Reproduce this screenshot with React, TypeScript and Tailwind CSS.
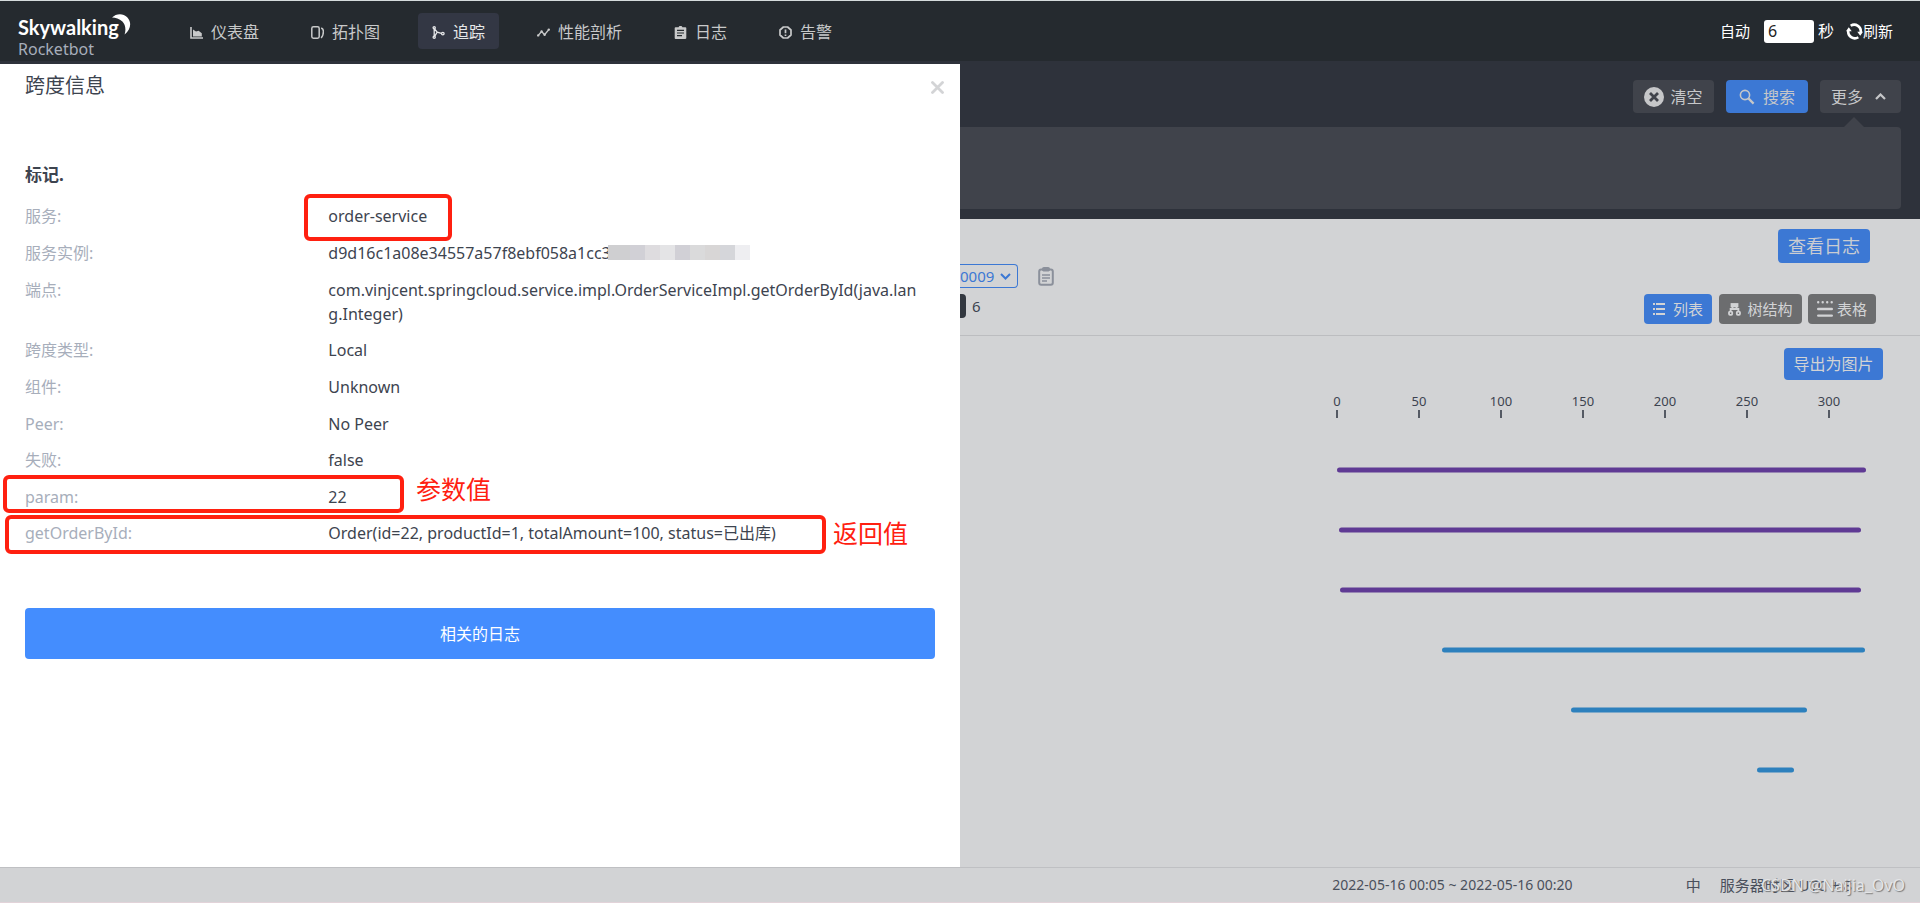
import type { ReactNode } from "react";

type NavItem = {
  label: string;
  icon: ReactNode;
  active?: boolean;
};

type Tag = {
  label: string;
  value: string;
  latin?: boolean;
  masked?: boolean;
  frame?: string;
  note?: string;
  noteClass?: string;
};

type Span = {
  start: number;
  end: number;
  color: string;
};

const NAV: NavItem[] = [
  {
    label: "仪表盘",
    icon: (
      <>
        <path d="M1 1v11h12" fill="none" stroke="currentColor" strokeWidth="1.6" />
        <path d="M3 10.4V3.6l3 1.8 2.6-.6 3.2 2.4v3.2z" fill="currentColor" />
      </>
    ),
  },
  {
    label: "拓扑图",
    icon: (
      <g fill="none" stroke="currentColor" strokeWidth="1.5">
        <rect x="0.8" y="0.8" width="7.4" height="11.4" rx="1.6" />
        <path d="M10.2 2c2 .8 2.2 2 2.2 3.4 0 2.2-.4 4.4-2.2 6.6" />
      </g>
    ),
  },
  {
    label: "追踪",
    active: true,
    icon: (
      <g fill="none" stroke="currentColor" strokeWidth="1.3">
        <circle cx="2.2" cy="1.8" r="1.1" />
        <circle cx="2.2" cy="11.2" r="1.1" />
        <circle cx="10.8" cy="7.6" r="1.3" />
        <path d="M2.2 3v7M2.6 3l2.6 3.2 4.2 1.2M2.8 10.2l2.4-4" />
      </g>
    ),
  },
  {
    label: "性能剖析",
    icon: (
      <>
        <path d="M1 9.6l3.6-4 3 3.2L12 3.4" fill="none" stroke="currentColor" strokeWidth="1.4" />
        <g fill="currentColor">
          <circle cx="1.2" cy="9.4" r="1.2" />
          <circle cx="4.6" cy="5.4" r="1.2" />
          <circle cx="7.6" cy="8.8" r="1.2" />
          <circle cx="11.8" cy="3.6" r="1.2" />
        </g>
      </>
    ),
  },
  {
    label: "日志",
    icon: (
      <path
        fillRule="evenodd"
        fill="currentColor"
        d="M1.6 1.2h3a2 2 0 0 1 3.8 0h3c.5 0 .9.4.9.9v10c0 .5-.4.9-.9.9H1.6a.9.9 0 0 1-.9-.9v-10c0-.5.4-.9.9-.9zM3 3.8V5h7V3.8zM3 6.4v1.2h7V6.4zM3 9v1.2h5V9z"
      />
    ),
  },
  {
    label: "告警",
    icon: (
      <>
        <path
          d="M4.4 1h4.2L12 4v5L8.6 12H4.4L1 9V4z"
          fill="none"
          stroke="currentColor"
          strokeWidth="1.7"
          strokeLinejoin="round"
        />
        <path d="M6.5 3.4v3.800M6.5 8.4v1.6" stroke="currentColor" strokeWidth="1.7" />
      </>
    ),
  },
];

const TAGS: Tag[] = [
  {
    label: "服务:",
    value: "order-service",
    frame: "left-[279px] -top-[10px] h-[47px] w-[148px]",
  },
  { label: "服务实例:", value: "d9d16c1a08e34557a57f8ebf058a1cc3", masked: true },
  {
    label: "端点:",
    value: "com.vinjcent.springcloud.service.impl.OrderServiceImpl.getOrderById(java.lang.Integer)",
  },
  { label: "跨度类型:", value: "Local" },
  { label: "组件:", value: "Unknown" },
  { label: "Peer:", value: "No Peer", latin: true },
  { label: "失败:", value: "false" },
  {
    label: "param:",
    value: "22",
    latin: true,
    frame: "-left-[22px] -top-[10px] h-[38px] w-[401px]",
    note: "参数值",
    noteClass: "left-[391px] -top-[12px]",
  },
  {
    label: "getOrderById:",
    value: "Order(id=22, productId=1, totalAmount=100, status=已出库)",
    latin: true,
    frame: "-left-[20px] -top-[6px] h-[39px] w-[821px]",
    note: "返回值",
    noteClass: "left-[808px] -top-[4px]",
  },
];

const MASK = [
  "w-[22px] bg-[#cfcfd1]",
  "w-[15px] bg-[#d1d0d6]",
  "w-[15px] bg-[#dedcdf]",
  "w-[15px] bg-[#e4e4e6]",
  "w-[15px] bg-[#d1d0d6]",
  "w-[15px] bg-[#dadadb]",
  "w-[15px] bg-[#d8d6d6]",
  "w-[15px] bg-[#d5d6da]",
  "w-[15px] bg-[#eeeef1]",
];

const TICKS = [0, 50, 100, 150, 200, 250, 300];

// pixel positions measured from the start of the trace
const SPANS: Span[] = [
  { start: 0, end: 529, color: "#5f3a94" },
  { start: 2, end: 524, color: "#5f3a94" },
  { start: 3, end: 524, color: "#5f3a94" },
  { start: 105, end: 528, color: "#2d80bd" },
  { start: 234, end: 470, color: "#2d80bd" },
  { start: 420, end: 457, color: "#2d80bd" },
];

function Header() {
  return (
    <header className="flex h-[61px] shrink-0 items-center border-t border-[#d5dbdc] bg-[#252a2f] pl-[18px] pr-[27px]">
      <a href="#" className="relative block w-[158px] pt-[7px]">
        <span className="block font-['Lato'] text-xl leading-7 font-bold text-white">Skywalking</span>
        <svg className="absolute top-2 left-[94px] h-[21px] w-[19px]" viewBox="0 0 19 21" fill="#fff">
          <path d="M0 3.6C4-.6 11-1 15.2 3.2 20.2 8.4 18.6 16 12.6 20.4 14.2 15.6 13.4 10.6 10.4 7.6 7.4 4.6 3.6 4 0 3.6z" />
        </svg>
        <span className="block text-base leading-4 text-[#a7aebb]">Rocketbot</span>
      </a>
      <nav className="flex gap-6">
        {NAV.map((item) => (
          <a
            key={item.label}
            href="#"
            className={
              item.active
                ? "flex h-9 items-center gap-2 rounded-[4px] bg-[#333744] px-[14px] pt-0.5 text-base text-[#e6e7e9]"
                : "flex h-9 items-center gap-2 rounded-[4px] px-[14px] pt-0.5 text-base text-[#c8c9ca]"
            }
          >
            <svg className="h-[13px] w-[13px]" viewBox="0 0 13 13">
              {item.icon}
            </svg>
            {item.label}
          </a>
        ))}
      </nav>
      <div className="ml-auto flex items-center text-[15px] text-white">
        <label htmlFor="interval">自动</label>
        <input
          id="interval"
          defaultValue="6"
          className="ml-[14px] h-[23px] w-[50px] rounded-[3px] bg-white px-1 text-base text-[#222]"
        />
        <span className="ml-1 text-base">秒</span>
        <button className="ml-3 flex items-center">
          <svg className="h-[17px] w-[17px]" viewBox="0 0 16 16" fill="none" stroke="#fff" strokeWidth="2.4">
            <path d="M4.4 2.6A6.2 6.2 0 0 1 13.8 9" />
            <path d="M11.6 13.4A6.2 6.2 0 0 1 2.2 7" />
            <path d="M10.6 8.200h5.400l-2.600 3.800zM5.400 7.800H0l2.600-3.800z" fill="#fff" stroke="none" />
          </svg>
          刷新
        </button>
      </div>
    </header>
  );
}

function Toolbar() {
  return (
    <div className="bg-[#2e323b] pt-[19px] pr-[19px] pb-[10px] pl-5 text-base text-[#c6c7c9]">
      <div className="flex justify-end gap-3">
        <button className="flex h-[33px] w-[81px] items-center justify-center gap-[6px] rounded-[4px] bg-[#40434b]">
          <svg className="h-5 w-5" viewBox="0 0 20 20">
            <circle cx="10" cy="10" r="10" fill="#c6c7c9" />
            <path d="M6 6l8 8M14 6l-8 8" stroke="#40434b" strokeWidth="2.8" />
          </svg>
          清空
        </button>
        <button className="flex h-[33px] w-[82px] items-center justify-center gap-2 rounded-[4px] bg-[#3c78d4]">
          <svg className="h-4 w-4" viewBox="0 0 16 16" fill="none" stroke="#c6c7c9">
            <circle cx="6" cy="6" r="4.6" strokeWidth="1.6" />
            <path d="M9.4 9.4l5.200 5.200" strokeWidth="2.2" />
          </svg>
          搜索
        </button>
        <button className="flex h-[33px] w-[81px] items-center justify-center gap-3 rounded-[4px] bg-[#40434b] pr-1">
          更多
          <svg className="h-[7px] w-[11px]" viewBox="0 0 11 7">
            <path d="M1 6l4.500-4.500L10 6" fill="none" stroke="#c6c7c9" strokeWidth="2.2" />
          </svg>
        </button>
      </div>
      <div className="relative mt-[14px] h-[82px] rounded-[4px] bg-[#40434b]">
        <svg className="absolute right-[37px] -top-[10px] h-[10px] w-5" viewBox="0 0 20 10">
          <path d="M0 10L10 0l10 10z" fill="#40434b" />
        </svg>
      </div>
    </div>
  );
}

function TraceChart() {
  return (
    <svg className="mr-[29px] ml-auto block h-[410px] w-[564px]" viewBox="0 0 564 410">
      {TICKS.map((tick, i) => (
        <g key={tick}>
          <text x={10 + i * 82} y="26" textAnchor="middle" fontSize="13" fill="#3d4350">
            {tick}
          </text>
          <rect x={9 + i * 82} y="30" width="2" height="8" fill="#555a64" />
        </g>
      ))}
      {SPANS.map((span, i) => (
        <rect
          key={i}
          x={10 + span.start}
          y={87.5 + i * 60}
          width={span.end - span.start}
          height="5"
          rx="2.5"
          fill={span.color}
        />
      ))}
    </svg>
  );
}

function TraceDetail() {
  return (
    <section className="ml-[50%] pt-[10px]">
      <div className="flex justify-end pr-[50px]">
        <button className="h-[34px] w-[92px] rounded-[4px] bg-[#3c78d4] text-lg leading-6 text-[#c9ccd2]">
          查看日志
        </button>
      </div>
      <div className="mt-px flex items-center">
        <div className="relative">
          <select
            aria-label="Trace ID"
            className="block h-6 w-[58px] appearance-none rounded-r-[4px] border border-l-0 border-[#3c78d4] text-[15px] leading-5 text-[#3c78d4]"
          >
            <option>0009</option>
          </select>
          <svg className="pointer-events-none absolute top-[9px] right-[7px] h-[7px] w-[11px]" viewBox="0 0 11 7">
            <path d="M1 1l4.500 4.500L10 1" fill="none" stroke="#3c78d4" strokeWidth="2" />
          </svg>
        </div>
        <button aria-label="copy" className="ml-5">
          <svg className="h-[19px] w-4" viewBox="0 0 16 19" fill="none" stroke="#8b909b">
            <rect x="1.2" y="2.6" width="13.6" height="15.2" rx="2" strokeWidth="2" />
            <rect x="4.5" y="0.5" width="7" height="3.5" rx="1" fill="#8b909b" />
            <path d="M4 8h8M4 11h8M4 14h5" strokeWidth="1.4" />
          </svg>
        </button>
      </div>
      <div className="mt-[6px] flex items-start border-b border-[#bcbdc0] pr-11 pb-[11px] text-[15px] text-[#d2d3d5]">
        <span className="h-6 w-[6px] rounded-r-[4px] bg-[#333840]" />
        <span className="ml-[6px] leading-6 text-[#3d4350]">6</span>
        <button className="ml-auto flex h-[30px] w-[68px] items-center justify-center gap-2 rounded-[4px] bg-[#3c78d4]">
          <svg className="h-3 w-3" viewBox="0 0 12 12" stroke="currentColor" strokeWidth="1.8">
            <path d="M0 1h2M3 1h9M0 6h2M3 6h9M0 11h2M3 11h9" />
          </svg>
          列表
        </button>
        <button className="ml-[7px] flex h-[30px] w-[83px] items-center justify-center gap-[6px] rounded-[4px] bg-[#6c6d6f]">
          <svg className="h-[13px] w-[13px]" viewBox="0 0 13 13" fill="none" stroke="currentColor" strokeWidth="1.8">
            <rect x="3.5" y="1" width="6" height="2.4" fill="currentColor" />
            <path d="M4.5 4v2M8.5 4v2M2.6 8.4V6h7.8v2.4" />
            <rect x="1" y="8.6" width="3.2" height="3.2" rx="1" />
            <rect x="8.8" y="8.6" width="3.2" height="3.2" rx="1" />
          </svg>
          树结构
        </button>
        <button className="ml-[6px] flex h-[30px] w-[68px] items-center justify-center gap-1 rounded-[4px] bg-[#6c6d6f]">
          <svg className="h-4 w-4" viewBox="0 0 16 16" stroke="currentColor" strokeLinecap="round">
            <path d="M1.2 1.2h.01M5.7 1.2h.01M10.2 1.2h.01M14.7 1.2h.01" strokeWidth="2.4" />
            <path d="M1.2 8h13.6M1.2 14.6h13.6" strokeWidth="2.4" />
          </svg>
          表格
        </button>
      </div>
      <div className="flex justify-end pt-3 pr-[37px]">
        <button className="h-8 w-[99px] rounded-[4px] bg-[#3c78d4] text-base text-[#d2d3d5]">导出为图片</button>
      </div>
      <TraceChart />
    </section>
  );
}

function TagRow({ tag }: { tag: Tag }) {
  return (
    <div className="relative grid grid-cols-[1fr_2fr] text-base">
      <dt className={tag.latin ? "leading-6 text-[#a7aebb]" : "leading-[25px] text-[#a7aebb]"}>{tag.label}</dt>
      <dd className="relative pr-4 leading-6 break-all text-[#3d444f]">
        {tag.value}
        {tag.masked && (
          <span className="absolute top-1 left-[280px] flex h-[15px]">
            {MASK.map((cell, i) => (
              <span key={i} className={cell} />
            ))}
          </span>
        )}
      </dd>
      {tag.frame && <span className={`absolute rounded-[6px] border-4 border-[#ff2010] ${tag.frame}`} />}
      {tag.note && (
        <span className={`absolute text-[25px] leading-8 whitespace-nowrap text-[#ff2010] ${tag.noteClass}`}>
          {tag.note}
        </span>
      )}
    </div>
  );
}

function SpanDrawer() {
  return (
    <aside className="absolute top-[3px] bottom-0 left-0 w-1/2 bg-white px-[25px] pt-2 text-[#3d444f]">
      <h2 className="text-xl leading-7">跨度信息</h2>
      <button aria-label="close" className="absolute top-[17px] right-4">
        <svg className="h-[13px] w-[13px]" viewBox="0 0 13 13">
          <path d="M1.5 1.5l10 10M11.5 1.5l-10 10" stroke="#d3d4d6" strokeWidth="2.8" strokeLinecap="round" />
        </svg>
      </button>
      <h3 className="mt-[63px] text-[17px] leading-6 font-bold">标记.</h3>
      <dl className="mt-[17px] flex flex-col gap-3">
        {TAGS.map((tag) => (
          <TagRow key={tag.label} tag={tag} />
        ))}
      </dl>
      <button className="mt-[63px] h-[51px] w-full rounded-[4px] bg-[#448dfe] text-base text-white">
        相关的日志
      </button>
    </aside>
  );
}

function Footer() {
  return (
    <footer className="relative flex h-9 shrink-0 items-center justify-end border-t border-b border-t-[#bfc0c3] border-b-[#e2d3d9] pr-[68px] text-[15px] text-[#4a505c]">
      <span className="text-sm">2022-05-16 00:05 ~ 2022-05-16 00:20</span>
      <button className="ml-[113px]">中</button>
      <span className="ml-[19px]">服务器时区 UTC + 8</span>
      <span className="absolute right-[15px] text-base text-[#e4e5e7] text-shadow-[1px_1px_1px_#777]">
        CSDN @Naijia_OvO
      </span>
    </footer>
  );
}

export default function App() {
  return (
    <div className="flex min-h-screen flex-col bg-[#d2d3d5] font-['Noto_Sans','Noto_Sans_CJK_SC',sans-serif]">
      <Header />
      <main className="relative flex-1">
        <Toolbar />
        <TraceDetail />
        <SpanDrawer />
      </main>
      <Footer />
    </div>
  );
}
